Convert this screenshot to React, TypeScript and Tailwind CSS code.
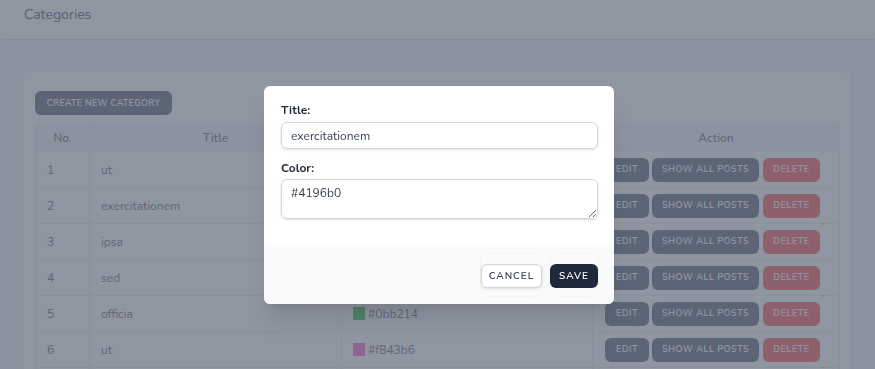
import { useState } from 'react';

type Category = { id: number; title: string; color: string };

const categories: Category[] = [
  { id: 1, title: 'ut', color: '#7c3aed' },
  { id: 2, title: 'exercitationem', color: '#4196b0' },
  { id: 3, title: 'ipsa', color: '#e5a50a' },
  { id: 4, title: 'sed', color: '#d9480f' },
  { id: 5, title: 'officia', color: '#0bb214' },
  { id: 6, title: 'ut', color: '#f843b6' },
  { id: 7, title: 'quia', color: '#3b82f6' },
];

const btn =
  'inline-flex items-center justify-center h-6 rounded-md leading-none font-semibold uppercase';

export default function App() {
  const [title, setTitle] = useState('exercitationem');
  const [color, setColor] = useState('#4196b0');

  return (
    <div className="relative min-h-screen bg-gray-100 font-['Nunito','Lato',sans-serif] text-gray-700">
      <header className="h-[39px] bg-white shadow-sm flex items-center px-6">
        <h2 className="text-[14px] leading-none text-gray-800 -mt-[10px]">Categories</h2>
      </header>

      <main className="px-6 pt-[33px]">
        <div className="bg-white rounded-md shadow-sm px-[11px] pt-[19px] pb-4">
          <div className="flex">
            <button className={`${btn} w-[137px] bg-gray-700 text-white text-[9px] tracking-[0.03em]`}>
              Create new category
            </button>
          </div>

          <table className="mt-[9px] w-full table-fixed border-collapse border border-gray-200 text-[12px]">
            <colgroup>
              <col className="w-[54px]" />
              <col className="w-[252px]" />
              <col className="w-[251px]" />
              <col />
            </colgroup>
            <thead>
              <tr className="h-[27px] bg-gray-100 text-gray-600">
                <th className="border border-gray-200 font-semibold">No.</th>
                <th className="border border-gray-200 font-semibold">Title</th>
                <th className="border border-gray-200 font-semibold">Color</th>
                <th className="border border-gray-200 font-semibold">Action</th>
              </tr>
            </thead>
            <tbody>
              {categories.map((c) => (
                <tr key={c.id} className="h-9">
                  <td className="border border-gray-200 px-[11px]">{c.id}</td>
                  <td className="border border-gray-200 px-[11px]">{c.title}</td>
                  <td className="border border-gray-200 px-[11px]">
                    <div className="flex items-center gap-[3px]">
                      <span className="w-3 h-[13px]" style={{ backgroundColor: c.color }} />
                      <span>{c.color}</span>
                    </div>
                  </td>
                  <td className="border border-gray-200 px-3">
                    <div className="flex items-center gap-[3px] text-[9px] tracking-[0.06em]">
                      <button className={`${btn} w-[44px] bg-gray-700 text-white`}>Edit</button>
                      <button className={`${btn} w-[107px] bg-gray-700 text-white`}>Show all posts</button>
                      <button className={`${btn} w-[57px] ml-px bg-red-500 text-white`}>Delete</button>
                    </div>
                  </td>
                </tr>
              ))}
            </tbody>
          </table>
        </div>
      </main>

      {/* modal */}
      <div className="fixed inset-0 bg-gray-500/75" />
      <div className="fixed inset-0 flex justify-center pt-[86px] pl-[3px]">
        <div className="w-[350px] h-fit bg-white rounded-md shadow-xl overflow-hidden">
          <div className="px-[17px] pt-4 pb-[26px]">
            <label className="block text-[12px] leading-4 font-bold text-gray-800">Title:</label>
            <input
              value={title}
              onChange={(e) => setTitle(e.target.value)}
              className="mt-1 block w-[317px] h-[27px] px-[9px] text-[12px] text-gray-700 border border-gray-300 rounded-md shadow-sm outline-none"
            />
            <label className="block mt-[11px] text-[12px] leading-4 font-bold text-gray-800">Color:</label>
            <textarea
              value={color}
              onChange={(e) => setColor(e.target.value)}
              className="mt-[3px] block w-[317px] h-10 px-[9px] pt-[4px] text-[12px] text-gray-700 border border-gray-300 rounded-md shadow-sm outline-none"
            />
          </div>
          <div className="bg-gray-50 flex justify-end gap-[6px] pr-[15px] pt-2 pb-[7px]">
            <span className="py-2 rounded-lg border border-gray-100">
              <button className={`${btn} w-[61px] bg-white border border-gray-300 text-gray-700 shadow-sm text-[10px] tracking-[0.1em]`}>
                Cancel
              </button>
            </span>
            <span className="py-2 rounded-lg border border-gray-100">
              <button className={`${btn} w-[48px] bg-gray-800 text-white text-[10px] tracking-[0.1em]`}>Save</button>
            </span>
          </div>
        </div>
      </div>
    </div>
  );
}
